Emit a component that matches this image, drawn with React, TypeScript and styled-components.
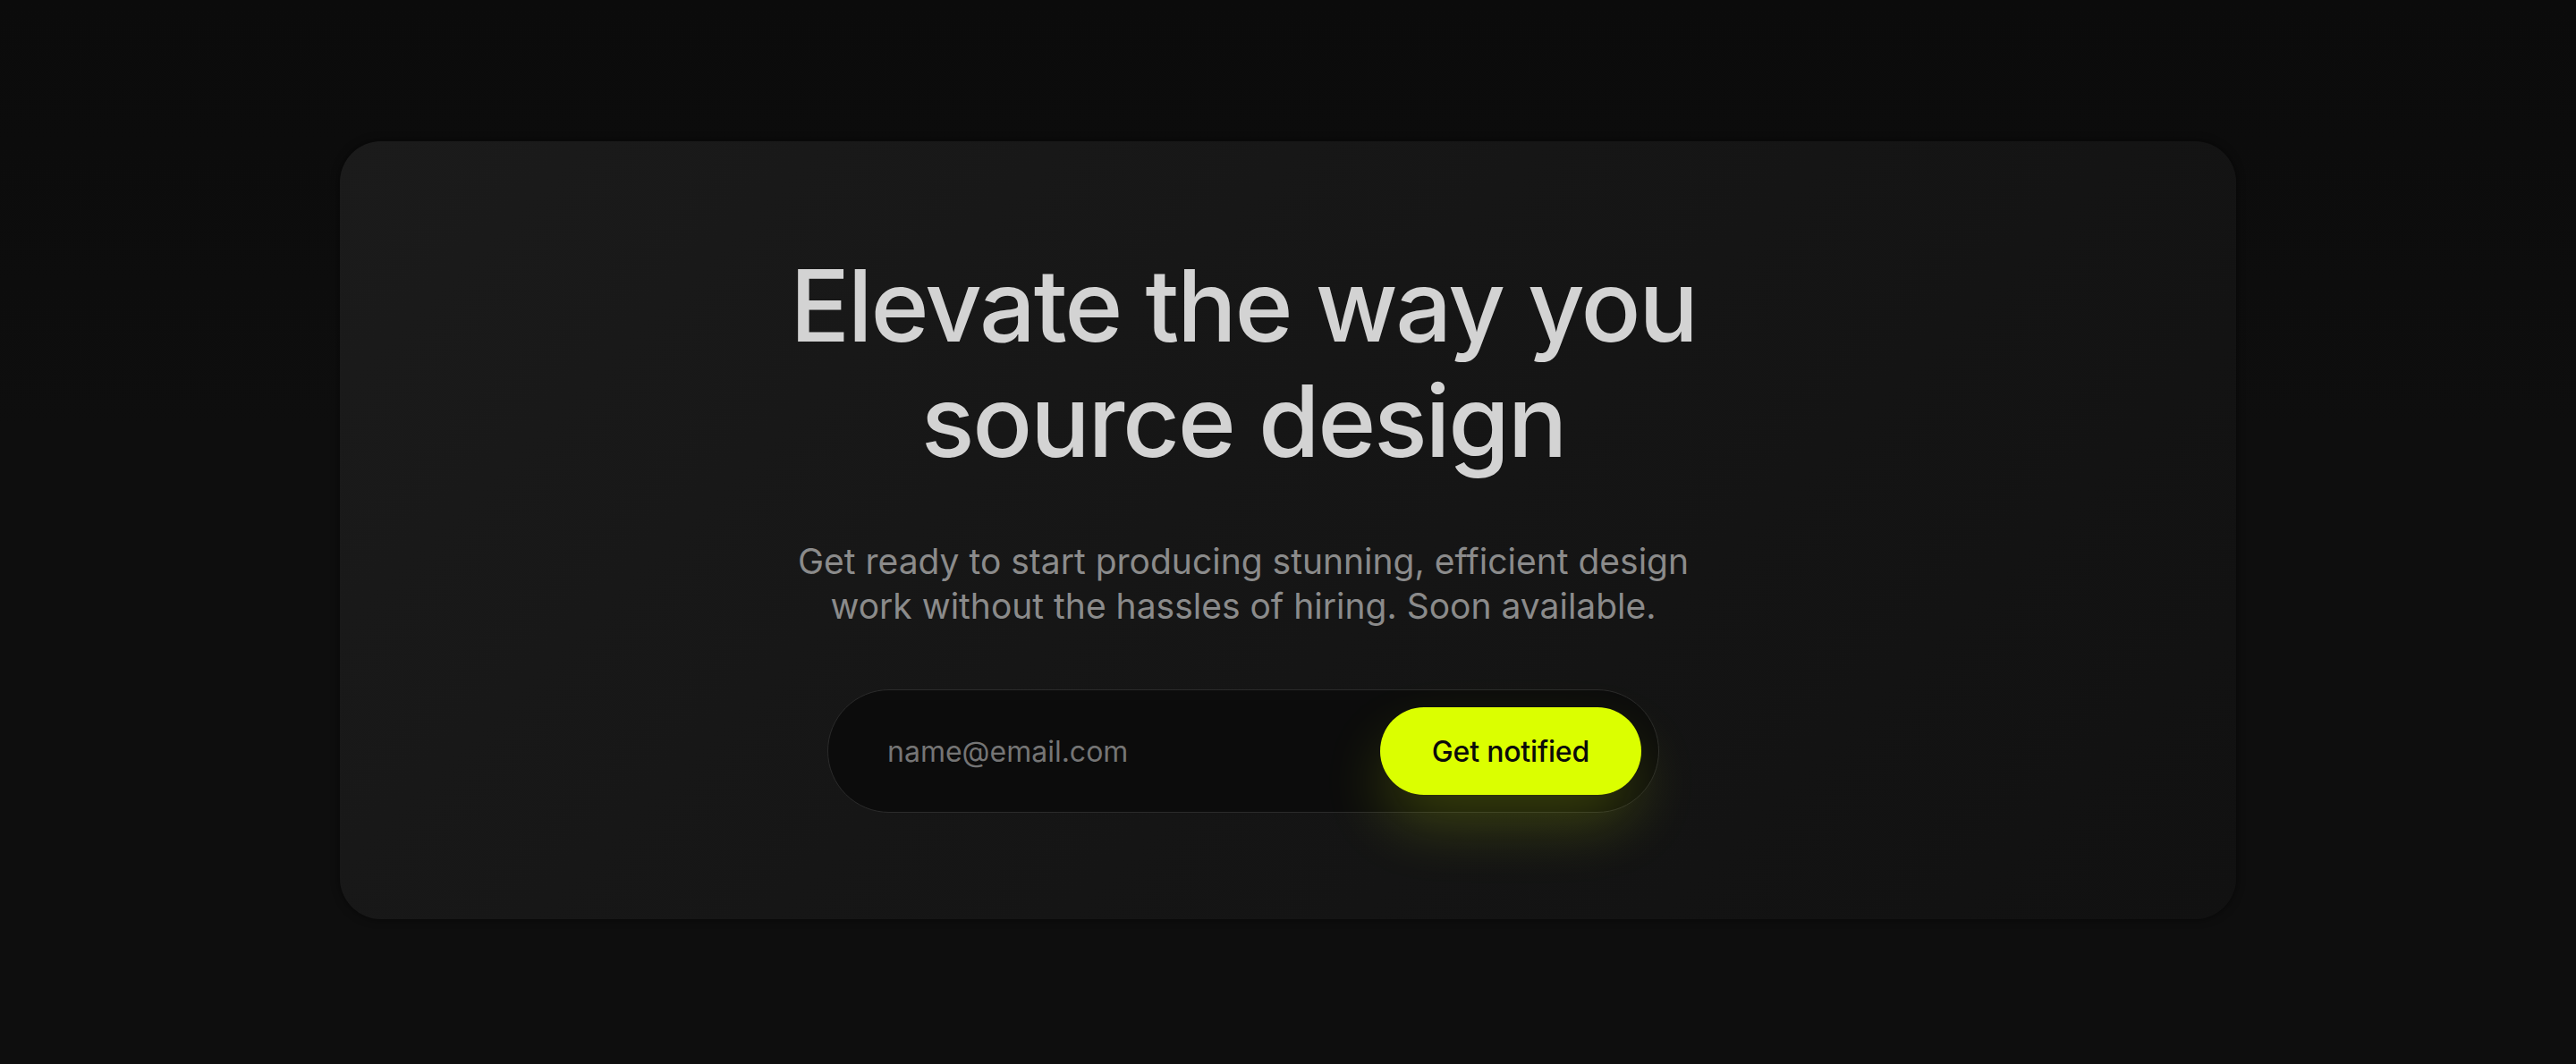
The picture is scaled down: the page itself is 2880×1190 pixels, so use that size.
import { createGlobalStyle } from 'styled-components';
import styled from 'styled-components';

const GlobalStyle = createGlobalStyle`
  html, body {
    margin: 0;
    padding: 0;
    background: #0d0d0d;
  }
  body {
    font-family: Inter, "Liberation Sans", sans-serif;
    -webkit-font-smoothing: antialiased;
  }
`;

const Page = styled.main`
  min-height: 1190px;
  padding: 158px 380px 0;
  box-sizing: border-box;
  background: linear-gradient(180deg, #0b0b0b 0%, #0e0e0e 40%, #0e0e0e 100%);
`;

const Card = styled.section`
  height: 870px;
  border-radius: 46px;
  background: linear-gradient(135deg, #1b1b1b 0%, #161616 45%, #111111 100%);
  box-shadow: 0 0 10px rgba(0, 0, 0, 0.55);
  display: flex;
  flex-direction: column;
  align-items: center;
  justify-content: center;
  padding-right: 100px;
  box-sizing: border-box;
`;

const Heading = styled.h1`
  margin: 0;
  font-family: Inter, "Liberation Sans", sans-serif;
  font-weight: 500;
  font-size: 111px;
  line-height: 129px;
  letter-spacing: -2.3px;
  color: #d3d3d3;
  text-align: center;
`;

const Lead = styled.p`
  margin: 68px 0 0;
  font-size: 39px;
  line-height: 50px;
  color: #8b8b8b;
  text-align: center;
  max-width: 1040px;
`;

const SignupForm = styled.form`
  margin-top: 68px;
  width: 930px;
  height: 138px;
  box-sizing: border-box;
  display: flex;
  align-items: center;
  justify-content: space-between;
  padding: 19px 19px 19px 64px;
  border: 1px solid #2b2b2b;
  border-radius: 69px;
  background: #0c0c0c;
`;

const EmailInput = styled.input`
  flex: 1;
  min-width: 0;
  border: none;
  outline: none;
  background: transparent;
  font-family: Inter, "Liberation Sans", sans-serif;
  font-size: 32px;
  color: #d3d3d3;

  &::placeholder {
    color: #757575;
  }
`;

const NotifyButton = styled.button`
  height: 98px;
  padding: 0 58px;
  border: none;
  border-radius: 49px;
  background: #dbff00;
  color: #0a0a0a;
  font-family: Inter, "Liberation Sans", sans-serif;
  font-weight: 500;
  font-size: 32px;
  letter-spacing: -0.2px;
  cursor: pointer;
  box-shadow: 0 34px 70px -6px rgba(219, 255, 0, 0.22);
`;

export default function App() {
  return (
    <>
      <GlobalStyle />
      <Page>
        <Card>
          <Heading>
            Elevate the way you
            <br />
            source design
          </Heading>
          <Lead>
            Get ready to start producing stunning, efficient design
            <br />
            work without the hassles of hiring. Soon available.
          </Lead>
          <SignupForm onSubmit={(e) => e.preventDefault()}>
            <EmailInput type="email" placeholder="name@email.com" />
            <NotifyButton type="submit">Get notified</NotifyButton>
          </SignupForm>
        </Card>
      </Page>
    </>
  );
}
